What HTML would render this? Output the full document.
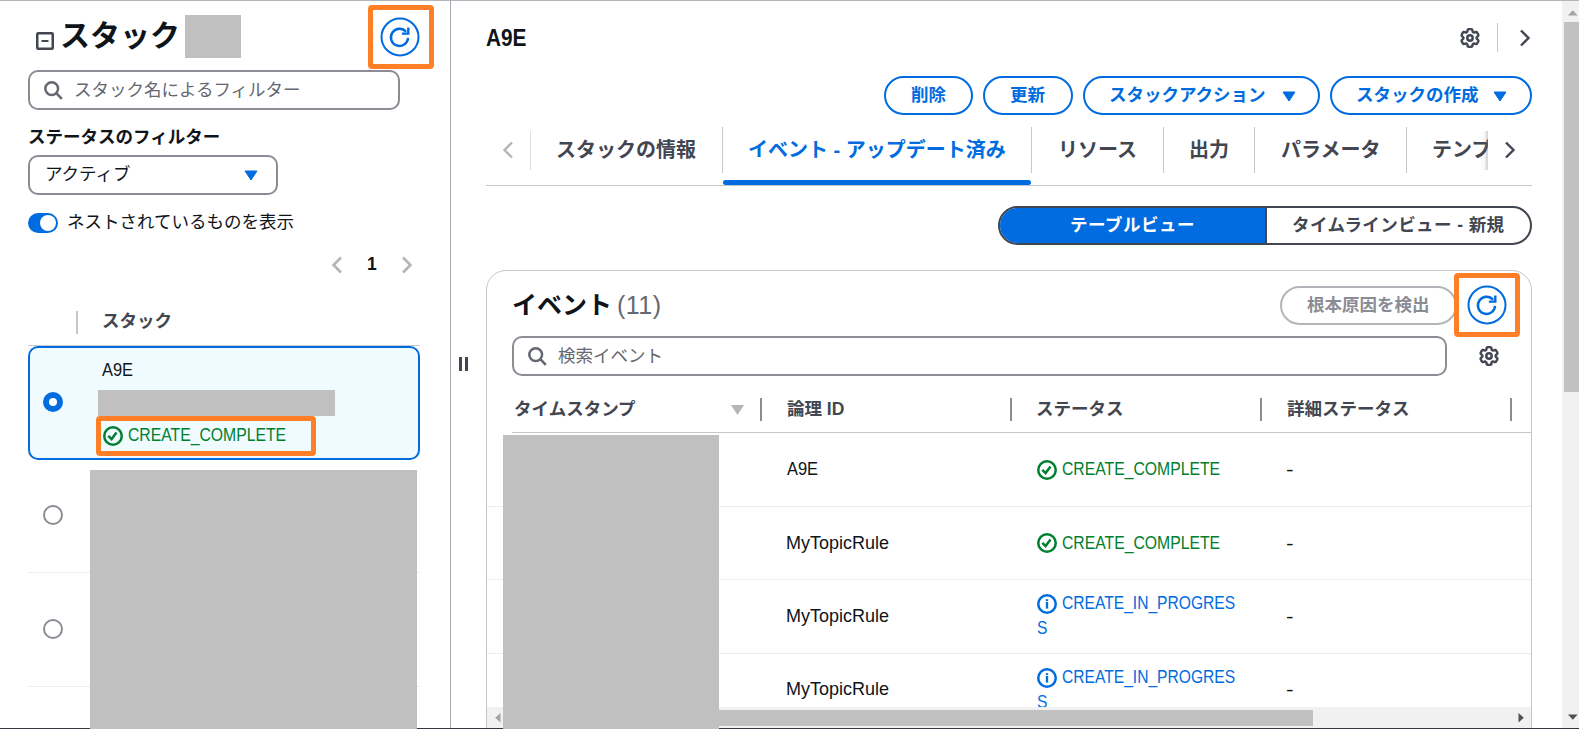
<!DOCTYPE html>
<html lang="ja">
<head>
<meta charset="utf-8">
<title>スタック</title>
<style>
*{box-sizing:border-box;margin:0;padding:0}
html,body{width:1579px;height:729px;overflow:hidden;background:#fff}
body{position:relative;font-family:"Liberation Sans","Noto Sans CJK JP",sans-serif;font-size:17.5px;color:#0f141a;line-height:1}
.a{position:absolute}
.t{position:absolute;white-space:nowrap;line-height:1;transform:translateY(calc(-50% + var(--dy,1.2px))) scaleX(var(--sx,1));transform-origin:left center}
.cc{--sx:.866;font-size:18.2px;--dy:.5px}
.cp{--sx:.858;font-size:18.2px;--dy:.5px}
.a9{--sx:.904;font-size:18.2px;--dy:.5px}
.mt{--sx:.99;font-size:18.2px;--dy:.5px}
.dash{--sx:1.3;--dy:2.2px}
.b{font-weight:bold}
.gray{background:#c0c0c0;z-index:6}
.hl{border:5px solid #ff7f27;border-radius:4px}
.vline{position:absolute;width:1px;background:#b4b4bb}
.hline{position:absolute;height:1px;background:#c6c6cd}
.input{position:absolute;border:2px solid #8c8c94;border-radius:10px;background:#fff}
.ph{color:#656871}
.btn{position:absolute;border:2px solid #006ce0;border-radius:20px;color:#006ce0;font-weight:bold;background:#fff}
.blue,.tab.blue{color:#006ce0}
.green{color:#00802f}
.tab{font-size:20px;font-weight:bold;color:#424650}
.tab.blue{color:#006ce0}
.th{font-weight:bold;color:#424650}
.radio{position:absolute;width:20px;height:20px;border-radius:50%;border:2.5px solid #8c8c94;background:#fff}
svg{position:absolute;overflow:visible}
</style>
</head>
<body>

<svg width="0" height="0" style="left:0;top:0"><defs>
<g id="gear"><path d="M16.60 10.00 L16.63 9.57 L16.85 9.10 L17.61 8.49 L18.34 7.77 L18.39 7.15 L18.22 6.60 L17.98 6.06 L17.71 5.55 L17.40 5.06 L17.05 4.59 L16.66 4.16 L16.10 3.90 L15.11 4.17 L14.20 4.52 L13.69 4.47 L13.30 4.28 L12.94 4.04 L12.64 3.62 L12.49 2.66 L12.23 1.66 L11.73 1.31 L11.16 1.18 L10.58 1.12 L10.00 1.10 L9.42 1.12 L8.84 1.18 L8.27 1.31 L7.77 1.66 L7.51 2.66 L7.36 3.62 L7.06 4.04 L6.70 4.28 L6.31 4.47 L5.80 4.52 L4.89 4.17 L3.90 3.90 L3.34 4.16 L2.95 4.59 L2.60 5.06 L2.29 5.55 L2.02 6.06 L1.78 6.60 L1.61 7.15 L1.66 7.77 L2.39 8.49 L3.15 9.10 L3.37 9.57 L3.40 10.00 L3.37 10.43 L3.15 10.90 L2.39 11.51 L1.66 12.23 L1.61 12.85 L1.78 13.40 L2.02 13.94 L2.29 14.45 L2.60 14.94 L2.95 15.41 L3.34 15.84 L3.90 16.10 L4.89 15.83 L5.80 15.48 L6.31 15.53 L6.70 15.72 L7.06 15.96 L7.36 16.38 L7.51 17.34 L7.77 18.34 L8.27 18.69 L8.84 18.82 L9.42 18.88 L10.00 18.90 L10.58 18.88 L11.16 18.82 L11.73 18.69 L12.23 18.34 L12.49 17.34 L12.64 16.38 L12.94 15.96 L13.30 15.72 L13.69 15.53 L14.20 15.48 L15.11 15.83 L16.10 16.10 L16.66 15.84 L17.05 15.41 L17.40 14.94 L17.71 14.45 L17.98 13.94 L18.22 13.40 L18.39 12.85 L18.34 12.23 L17.61 11.51 L16.85 10.90 L16.63 10.43Z" fill="none" stroke="#424650" stroke-width="2.4" stroke-linejoin="round"/><circle cx="10" cy="10" r="2.7" fill="none" stroke="#424650" stroke-width="2.5"/></g>
<g id="refresh" fill="none" stroke="#006ce0"><circle cx="20" cy="20" r="18.5" stroke-width="2"/><path d="M28.1 20.9A8.6 8.6 0 1 1 26.1 14.8" stroke-width="2.4"/><path d="M28.3 10.4V16.6H21.9" stroke-width="2.4"/></g>
</defs></svg>
<!-- ================= outer frame ================= -->
<div class="a" style="left:0;top:0;width:1579px;height:1px;background:#b4b4bb"></div>

<!-- ================= LEFT PANEL ================= -->
<div id="left">
  <!-- collapse icon -->
  <svg style="left:36px;top:32px" width="18" height="18" viewBox="0 0 18 18"><rect x="1.25" y="1.25" width="15.5" height="15.5" rx="1" fill="none" stroke="#424650" stroke-width="2.5"/><line x1="5.5" y1="9" x2="12.5" y2="9" stroke="#424650" stroke-width="2"/></svg>
  <div class="t b" style="left:60px;top:35px;font-size:30px">スタック</div>
  <div class="a gray" style="left:185px;top:15px;width:56px;height:43px"></div>

  <!-- refresh highlighted -->
  <div class="a hl" style="left:368px;top:5px;width:66px;height:64px"></div>
  <svg style="left:380px;top:17px" width="40" height="40" viewBox="0 0 40 40"><use href="#refresh"/></svg>

  <!-- search -->
  <div class="input" style="left:28px;top:70px;width:372px;height:40px"></div>
  <svg style="left:44px;top:81px" width="20" height="20" viewBox="0 0 20 20"><circle cx="7.7" cy="7.6" r="6.4" fill="none" stroke="#656871" stroke-width="2.5"/><line x1="12.3" y1="12.2" x2="17.8" y2="17.8" stroke="#656871" stroke-width="2.6"/></svg>
  <div class="t ph" style="left:74px;top:90px">スタック名によるフィルター</div>

  <div class="t b" style="left:28px;top:136.5px">ステータスのフィルター</div>

  <!-- select -->
  <div class="input" style="left:28px;top:155px;width:250px;height:40px"></div>
  <div class="t" style="left:45px;top:174px">アクティブ</div>
  <svg style="left:244px;top:170px" width="14" height="11" viewBox="0 0 14 11"><path d="M1 1h12L7 10z" fill="#006ce0" stroke="#006ce0" stroke-width="1" stroke-linejoin="round"/></svg>

  <!-- toggle -->
  <div class="a" style="left:28px;top:213px;width:30px;height:20px;border-radius:10px;background:#006ce0"></div>
  <div class="a" style="left:39.5px;top:215px;width:16px;height:16px;border-radius:50%;background:#fff"></div>
  <div class="t" style="left:67px;top:222px">ネストされているものを表示</div>

  <!-- pagination -->
  <svg style="left:331px;top:256px" width="12" height="18" viewBox="0 0 12 18"><path d="M10 1.5L2.5 9l7.5 7.5" fill="none" stroke="#b4b4bb" stroke-width="2.6"/></svg>
  <div class="t b" style="left:367px;top:264px">1</div>
  <svg style="left:401px;top:256px" width="12" height="18" viewBox="0 0 12 18"><path d="M2 1.5L9.5 9 2 16.5" fill="none" stroke="#b4b4bb" stroke-width="2.6"/></svg>

  <!-- table header -->
  <div class="vline" style="left:76.3px;top:311px;height:23px;background:#c6c6cd;width:1.5px"></div>
  <div class="t th" style="left:102px;top:321px">スタック</div>
  <div class="hline" style="left:28px;top:345px;width:392px"></div>

  <!-- selected row -->
  <div class="a" style="left:28px;top:346px;width:392px;height:114px;border:2px solid #006ce0;border-radius:10px;background:#f0fbff"></div>
  <div class="a" style="left:43px;top:392px;width:20px;height:20px;border-radius:50%;background:#fff;border:6px solid #006ce0"></div>
  <div class="t a9" style="left:102px;top:370px">A9E</div>
  <div class="a gray" style="left:98px;top:390px;width:237px;height:26px"></div>
  <div class="a hl" style="left:96px;top:416px;width:220px;height:40px"></div>
  <svg style="left:103px;top:426px" width="20" height="20" viewBox="0 0 20 20"><circle cx="10" cy="10" r="8.75" fill="none" stroke="#00802f" stroke-width="2.5"/><path d="M5.3 9.8l3.3 3.3 4.9-6.5" fill="none" stroke="#00802f" stroke-width="2.5"/></svg>
  <div class="t green cc" style="left:128px;top:435px">CREATE_COMPLETE</div>

  <!-- other rows -->
  <div class="a gray" style="left:90px;top:470px;width:327px;height:259px"></div>
  <div class="radio" style="left:43px;top:505px"></div>
  <div class="hline" style="left:28px;top:572px;width:392px;background:#ebebf0"></div>
  <div class="radio" style="left:43px;top:619px"></div>
  <div class="hline" style="left:28px;top:686px;width:392px;background:#ebebf0"></div>
  <div class="a gray" style="left:90px;top:470px;width:327px;height:259px"></div>
</div>

<!-- split divider -->
<div class="a" style="left:450px;top:1px;width:1px;height:727px;background:#a9a9b2"></div>
<div class="a" style="left:459px;top:356.5px;width:2.5px;height:14px;background:#424650"></div>
<div class="a" style="left:465px;top:356.5px;width:2.5px;height:14px;background:#424650"></div>

<!-- ================= RIGHT PANEL ================= -->
<div id="right">
  <div class="t b" style="left:485.5px;top:38.3px;font-size:23.4px;--sx:.89">A9E</div>

  <svg style="left:1460px;top:27.8px" width="20" height="20" viewBox="0 0 20 20"><use href="#gear"/></svg>
  <div class="vline" style="left:1497px;top:23px;height:29px;background:#c6c6cd"></div>
  <svg style="left:1519.4px;top:29px" width="12" height="18" viewBox="0 0 12 18"><path d="M2 1.5L9.5 9 2 16.5" fill="none" stroke="#424650" stroke-width="2.4"/></svg>

  <!-- buttons -->
  <div class="btn" style="left:884px;top:76px;width:89px;height:39px"></div>
  <div class="t b blue" style="left:911px;top:95px">削除</div>
  <div class="btn" style="left:983px;top:76px;width:90px;height:39px"></div>
  <div class="t b blue" style="left:1010px;top:95px">更新</div>
  <div class="btn" style="left:1083px;top:76px;width:237px;height:39px"></div>
  <div class="t b blue" style="left:1109px;top:95px">スタックアクション</div>
  <svg style="left:1281.5px;top:91px" width="14" height="11" viewBox="0 0 14 11"><path d="M1 1h12L7 10z" fill="#006ce0" stroke="#006ce0" stroke-width="1" stroke-linejoin="round"/></svg>
  <div class="btn" style="left:1330px;top:76px;width:202px;height:39px"></div>
  <div class="t b blue" style="left:1356px;top:95px">スタックの作成</div>
  <svg style="left:1493.2px;top:91px" width="14" height="11" viewBox="0 0 14 11"><path d="M1 1h12L7 10z" fill="#006ce0" stroke="#006ce0" stroke-width="1" stroke-linejoin="round"/></svg>

  <!-- tabs -->
  <svg style="left:502px;top:141px" width="12" height="18" viewBox="0 0 12 18"><path d="M10 1.5L2.5 9l7.5 7.5" fill="none" stroke="#b4b4bb" stroke-width="2.4"/></svg>
  <div class="vline" style="left:530px;top:131px;height:39px;background:#dedee3"></div>
  <div class="t tab" style="left:556px;top:149px">スタックの情報</div>
  <div class="vline" style="left:722px;top:127px;height:46px;background:#c6c6cd"></div>
  <div class="t tab blue" style="left:748px;top:149px">イベント - アップデート済み</div>
  <div class="hline" style="left:486px;top:185px;width:1046px"></div>
  <div class="a" style="left:723px;top:180px;width:308px;height:4.5px;border-radius:3px;background:#006ce0"></div>
  <div class="vline" style="left:1031px;top:127px;height:46px;background:#c6c6cd"></div>
  <div class="t tab" style="left:1058px;top:149px">リソース</div>
  <div class="vline" style="left:1163px;top:127px;height:46px;background:#c6c6cd"></div>
  <div class="t tab" style="left:1189px;top:149px">出力</div>
  <div class="vline" style="left:1254px;top:127px;height:46px;background:#c6c6cd"></div>
  <div class="t tab" style="left:1281px;top:149px">パラメータ</div>
  <div class="vline" style="left:1406px;top:127px;height:46px;background:#c6c6cd"></div>
  <div class="a" style="left:1432px;top:130px;width:56px;height:40px;overflow:hidden"><div class="t tab" style="left:0;top:19px">テンプレート</div></div>
  <div class="a" style="left:1480px;top:131px;width:8px;height:39px;background:linear-gradient(to right,rgba(120,120,130,0) 0%,rgba(120,120,130,.07) 65%,rgba(120,120,130,.28) 78%,rgba(120,120,130,.28) 100%)"></div>
  <svg style="left:1504px;top:141px" width="12" height="18" viewBox="0 0 12 18"><path d="M2 1.5L9.5 9 2 16.5" fill="none" stroke="#424650" stroke-width="2.4"/></svg>

  <!-- segmented control -->
  <div class="a" style="left:998px;top:206px;width:534px;height:39px;border:2px solid #424650;border-radius:20px;background:#fff;overflow:hidden"><div class="a" style="left:0;top:0;width:267px;height:35px;background:#006ce0;border-right:2px solid #424650"></div></div>
  <div class="t b" style="left:1070px;top:225px;color:#fff;letter-spacing:.5px">テーブルビュー</div>
  <div class="t b" style="left:1292px;top:225px;color:#424650;letter-spacing:.4px">タイムラインビュー - 新規</div>

  <!-- container -->
  <div class="a" style="left:486px;top:270px;width:1046px;height:480px;border:1.5px solid #c6c6cd;border-radius:20px;background:#fff"></div>
  <div class="t b" style="left:512px;top:304px;font-size:25px">イベント <span style="font-weight:normal;color:#656871;margin-left:-2px;letter-spacing:.5px">(11)</span></div>

  <div class="btn" style="left:1280px;top:286px;width:177px;height:39px;border-color:#b4b4bb"></div>
  <div class="t b" style="left:1307px;top:305px;color:#8c8c94">根本原因を検出</div>
  <div class="a hl" style="left:1454px;top:273px;width:66px;height:64px"></div>
  <svg style="left:1466.5px;top:285.4px" width="40" height="40" viewBox="0 0 40 40"><use href="#refresh"/></svg>

  <div class="input" style="left:512px;top:336px;width:935px;height:40px"></div>
  <svg style="left:528px;top:347px" width="20" height="20" viewBox="0 0 20 20"><circle cx="7.7" cy="7.6" r="6.4" fill="none" stroke="#656871" stroke-width="2.5"/><line x1="12.3" y1="12.2" x2="17.8" y2="17.8" stroke="#656871" stroke-width="2.6"/></svg>
  <div class="t ph" style="left:558px;top:356px">検索イベント</div>

  <svg style="left:1479px;top:346px" width="20" height="20" viewBox="0 0 20 20"><use href="#gear"/></svg>

  <!-- table header -->
  <div class="t th" style="left:514px;top:409px">タイムスタンプ</div>
  <svg style="left:730.5px;top:404.7px" width="13" height="10" viewBox="0 0 13 10"><path d="M0 0h13L6.5 10z" fill="#b4b4bb"/></svg>
  <div class="vline" style="left:760.2px;top:398px;height:22.5px;background:#8c8c94;width:1.5px"></div>
  <div class="t th" style="left:787px;top:409px">論理 ID</div>
  <div class="vline" style="left:1010.2px;top:398px;height:22.5px;background:#8c8c94;width:1.5px"></div>
  <div class="t th" style="left:1036px;top:409px">ステータス</div>
  <div class="vline" style="left:1260.2px;top:398px;height:22.5px;background:#8c8c94;width:1.5px"></div>
  <div class="t th" style="left:1287px;top:409px">詳細ステータス</div>
  <div class="vline" style="left:1510.2px;top:398px;height:22.5px;background:#8c8c94;width:1.5px"></div>
  <div class="hline" style="left:512px;top:432px;width:1020px"></div>

  <!-- rows -->
  <div class="t a9" style="left:787px;top:469px">A9E</div>
  <svg style="left:1037px;top:460px" width="20" height="20" viewBox="0 0 20 20"><circle cx="10" cy="10" r="8.75" fill="none" stroke="#00802f" stroke-width="2.5"/><path d="M5.3 9.8l3.3 3.3 4.9-6.5" fill="none" stroke="#00802f" stroke-width="2.5"/></svg>
  <div class="t green cc" style="left:1062px;top:469px">CREATE_COMPLETE</div>
  <div class="t dash" style="left:1285.5px;top:469px">-</div>
  <div class="hline" style="left:487px;top:506px;width:1044px;background:#ebebf0"></div>

  <div class="t mt" style="left:786px;top:543px">MyTopicRule</div>
  <svg style="left:1037px;top:533px" width="20" height="20" viewBox="0 0 20 20"><circle cx="10" cy="10" r="8.75" fill="none" stroke="#00802f" stroke-width="2.5"/><path d="M5.3 9.8l3.3 3.3 4.9-6.5" fill="none" stroke="#00802f" stroke-width="2.5"/></svg>
  <div class="t green cc" style="left:1062px;top:543px">CREATE_COMPLETE</div>
  <div class="t dash" style="left:1285.5px;top:543px">-</div>
  <div class="hline" style="left:487px;top:579px;width:1044px;background:#ebebf0"></div>

  <div class="t mt" style="left:786px;top:616px">MyTopicRule</div>
  <svg style="left:1037px;top:594px" width="20" height="20" viewBox="0 0 20 20"><circle cx="10" cy="10" r="8.75" fill="none" stroke="#006ce0" stroke-width="2.5"/><rect x="8.85" y="8" width="2.3" height="6.6" fill="#006ce0"/><rect x="8.85" y="5.2" width="2.3" height="1.9" fill="#006ce0"/></svg>
  <div class="t blue cp" style="left:1062px;top:603px">CREATE_IN_PROGRES</div>
  <div class="t blue cp" style="left:1037px;top:628px">S</div>
  <div class="t dash" style="left:1285.5px;top:616px">-</div>
  <div class="hline" style="left:487px;top:653px;width:1044px;background:#ebebf0"></div>

  <div class="t mt" style="left:786px;top:689px">MyTopicRule</div>
  <svg style="left:1037px;top:668px" width="20" height="20" viewBox="0 0 20 20"><circle cx="10" cy="10" r="8.75" fill="none" stroke="#006ce0" stroke-width="2.5"/><rect x="8.85" y="8" width="2.3" height="6.6" fill="#006ce0"/><rect x="8.85" y="5.2" width="2.3" height="1.9" fill="#006ce0"/></svg>
  <div class="t blue cp" style="left:1062px;top:677px">CREATE_IN_PROGRES</div>
  <div class="t blue cp" style="left:1037px;top:702px">S</div>
  <div class="t dash" style="left:1285.5px;top:689px">-</div>

  <!-- bottom frame line -->
  <div class="a" style="left:0;top:727.6px;width:1579px;height:1.4px;background:#333843;z-index:5"></div>
  <!-- horizontal scrollbar -->
  <div class="a" style="left:487px;top:707px;width:1044px;height:21px;background:#f1f1f1"></div>
  <div class="a" style="left:504px;top:710px;width:808.5px;height:15.5px;background:#c1c1c1"></div>
  <svg style="left:494.7px;top:712.8px" width="6" height="10" viewBox="0 0 6 10"><path d="M5.5 0v9.6L0.2 4.8z" fill="#a3a3a3"/></svg>
  <svg style="left:1517.6px;top:712.8px" width="6" height="10" viewBox="0 0 6 10"><path d="M0.5 0v9.6L5.8 4.8z" fill="#505050"/></svg>

  <!-- redacted timestamps -->
  <div class="a gray" style="left:503px;top:435px;width:216px;height:294px"></div>
</div>

<!-- vertical scrollbar -->
<div class="a" style="left:1562px;top:1px;width:17px;height:728px;background:#f1f1f1"></div>
<div class="a" style="left:1564px;top:22px;width:15px;height:370px;background:#c1c1c1"></div>
<svg style="left:1567.5px;top:9.5px" width="10" height="6" viewBox="0 0 10 6"><path d="M0 5.5h9.6L4.8 0.3z" fill="#a3a3a3"/></svg>
<svg style="left:1567.5px;top:713.6px" width="10" height="6" viewBox="0 0 10 6"><path d="M0 0.5h9.6L4.8 5.7z" fill="#505050"/></svg>

</body>
</html>
